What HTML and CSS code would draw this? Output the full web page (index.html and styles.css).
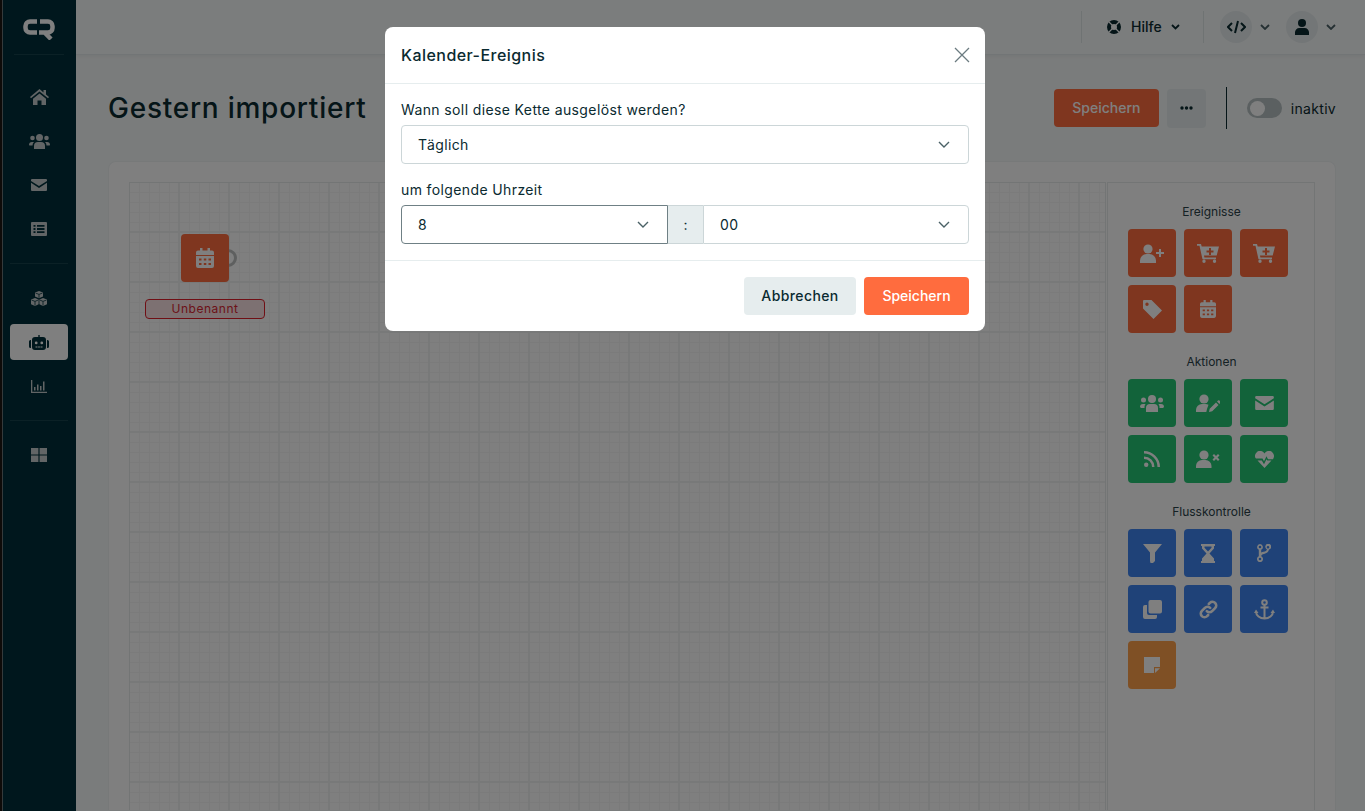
FILE: index.html
```html
<!DOCTYPE html>
<html lang="de">
<head>
    <meta charset="UTF-8">
    <title>Gestern importiert</title>
    <link rel="stylesheet" href="styles.css">
</head>
<body>
    <div class="app">
        <nav class="sidebar">
            <div class="logo">
                <svg width="32" height="21" viewBox="0 0 32 21"><path d="M14 2.500H7a4.500 4.500 0 0 0-4.500 4.500v2A4.500 4.500 0 0 0 7 13.500h7M17 2.500h8a4.500 4.500 0 0 1 4.500 4.500v2a4.500 4.500 0 0 1-4.500 4.500h-9M22 14l6 6" fill="none" stroke="currentColor" stroke-width="4.500"/></svg>
            </div>
            <ul class="nav-group">
                <li><svg width="19" height="16" viewBox="0 0 19 16"><path d="M9.500 0 0 8l1 1.200L9.500 2.500 18 9.200 19 8l-3-2.500V1h-2.500v2.400zM3 9.800V16h4.500v-4.500h4V16H16V9.800L9.500 4.500z"/></svg></li>
                <li><svg width="21" height="15" viewBox="0 0 21 15"><circle cx="10.500" cy="3.500" r="3.500"/><circle cx="3.500" cy="4" r="2.300"/><circle cx="17.500" cy="4" r="2.300"/><path d="M5 15v-3a4 4 0 0 1 4-4h3a4 4 0 0 1 4 4v3zM0 11a3 3 0 0 1 3-3h2a5 5 0 0 0-1.500 3.500h-3zM21 11a3 3 0 0 0-3-3h-2a5 5 0 0 1 1.500 3.500h3z"/></svg></li>
                <li><svg width="16" height="12" viewBox="0 0 16 12"><path d="M1 0h14a1 1 0 0 1 1 1v1L8 7 0 2V1a1 1 0 0 1 1-1zM0 3.800 8 9l8-5.200V11a1 1 0 0 1-1 1H1a1 1 0 0 1-1-1z"/></svg></li>
                <li><svg width="16" height="14" viewBox="0 0 16 14"><path fill-rule="evenodd" d="M1 0h14a1 1 0 0 1 1 1v12a1 1 0 0 1-1 1H1a1 1 0 0 1-1-1V1a1 1 0 0 1 1-1zm1.500 3v1.800h2V3zm3.500 0v1.800h7.500V3zM2.500 6.100v1.800h2V6.100zm3.500 0v1.800h7.500V6.100zM2.500 9.200V11h2V9.200zm3.500 0V11h7.500V9.200z"/></svg></li>
            </ul>
            <ul class="nav-group">
                <li><svg width="16" height="15" viewBox="0 0 16 15"><path d="M8 0l4 1.600v4L8 7.200 4 5.600v-4zM4 7l3.600 1.500v4.700L4 15 0 13.300V8.600zM12 7l4 1.600v4.700L12 15l-3.600-1.800V8.500z"/><path d="M4.500 2 8 3.400 11.500 2M8 3.400v3.400M.5 9 4 10.400 7.200 9M4 10.400V14.500M8.800 9 12 10.400 15.500 9M12 10.400V14.500" fill="none" stroke="#002f3a" stroke-width=".8"/></svg></li>
                <li class="active"><svg width="20" height="16" viewBox="0 0 20 16"><path fill-rule="evenodd" d="M6 3h3.300V1h1.400v2H14a3 3 0 0 1 3 3v7a3 3 0 0 1-3 3H6a3 3 0 0 1-3-3V6a3 3 0 0 1 3-3zm1.200 4.500a1.400 1.400 0 1 0 0 2.800 1.400 1.400 0 0 0 0-2.800zm5.600 0a1.400 1.400 0 1 0 0 2.800 1.400 1.400 0 0 0 0-2.800zM6.500 12.500v1h2v-1zm2.600 0v1h1.800v-1zm2.400 0v1h2v-1zM0 7.500A1.500 1.500 0 0 1 1.500 6H2v8h-.5A1.500 1.500 0 0 1 0 12.500zM20 7.500A1.500 1.500 0 0 0 18.500 6H18v8h.5a1.500 1.500 0 0 0 1.500-1.500z"/></svg></li>
                <li><svg width="16" height="13" viewBox="0 0 16 13"><path d="M0 0h1.300v11.700H16V13H0zM3 7h1.500v3.500H3zM6 4.500h1.500v6H6zM9 6h1.500v4.500H9zM12 1.500h1.500v9H12z"/></svg></li>
            </ul>
            <ul class="nav-group">
                <li><svg width="16" height="14" viewBox="0 0 16 14"><path d="M0 0h7.400v6.500H0zM8.600 0H16v6.500H8.600zM0 7.500h7.400V14H0zM8.600 7.500H16V14H8.600z"/></svg></li>
            </ul>
        </nav>

        <div class="main">
            <header class="topbar">
                <div class="topbar-item help">
                    <svg class="help-icon" width="14" height="14" viewBox="0 0 14 14"><circle cx="7" cy="7" r="5" fill="none" stroke="currentColor" stroke-width="4"/><path d="M2 2l10 10M12 2 2 12" stroke="#fff" stroke-width="1.200"/></svg>
                    <span class="help-text">Hilfe</span>
                    <svg class="chevron" width="9" height="6" viewBox="0 0 9 6"><path d="M1 1l3.500 3.500L8 1" fill="none" stroke="currentColor" stroke-width="1.800"/></svg>
                </div>
                <div class="topbar-item users">
                    <span class="round-btn"><svg width="19" height="14" viewBox="0 0 19 14"><path d="M5 3 1 7l4 4M14 3l4 4-4 4M11 1 8 13" fill="none" stroke="currentColor" stroke-width="2"/></svg></span>
                    <svg class="chevron light" width="10" height="6" viewBox="0 0 10 6"><path d="M1 1l4 4 4-4" fill="none" stroke="currentColor" stroke-width="1.800"/></svg>
                    <span class="round-btn"><svg width="14" height="16" viewBox="0 0 14 16"><circle cx="7" cy="4" r="4"/><path d="M0 14a4.500 4.500 0 0 1 4.500-5h5A4.500 4.500 0 0 1 14 14v2H0z"/></svg></span>
                    <svg class="chevron light" width="10" height="6" viewBox="0 0 10 6"><path d="M1 1l4 4 4-4" fill="none" stroke="currentColor" stroke-width="1.800"/></svg>
                </div>
            </header>

            <div class="content">
                <div class="page-head">
                    <h1>Gestern importiert</h1>
                    <div class="page-actions">
                        <button class="btn-save-page">Speichern</button>
                        <button class="btn-more"><svg width="13" height="4" viewBox="0 0 13 4"><circle cx="2" cy="2" r="1.700"/><circle cx="6.500" cy="2" r="1.700"/><circle cx="11" cy="2" r="1.700"/></svg></button>
                        <span class="page-divider"></span>
                        <span class="toggle"><span class="toggle-knob"></span></span>
                        <span class="toggle-label">inaktiv</span>
                    </div>
                </div>

                <div class="card">
                    <div class="canvas">
                        <div class="node">
                            <span class="node-port"></span>
                            <span class="tile orange node-tile">
                                <svg width="18" height="20" viewBox="0 0 18 20"><use href="#ico-calendar"/></svg>
                            </span>
                        </div>
                        <div class="node-label">Unbenannt</div>
                    </div>

                    <aside class="palette">
                        <h3>Ereignisse</h3>
                        <div class="tiles">
                            <span class="tile orange"><svg width="24" height="19" viewBox="0 0 24 19"><circle cx="8" cy="5" r="4.600"/><path d="M0 19v-2.500A6.500 6.500 0 0 1 6.500 10h3a6.500 6.500 0 0 1 6.500 6.500V19zM19 5h2v3h3v2h-3v3h-2v-3h-3V8h3z"/></svg></span>
                            <span class="tile orange"><svg width="22" height="19" viewBox="0 0 22 19"><use href="#ico-cart"/></svg></span>
                            <span class="tile orange"><svg width="22" height="19" viewBox="0 0 22 19"><use href="#ico-cart"/></svg></span>
                            <span class="tile orange"><svg width="19" height="19" viewBox="0 0 19 19"><path fill-rule="evenodd" d="M1 0h7.500L19 10.500 10.500 19 0 8.500V1a1 1 0 0 1 1-1zm3 2.500a1.700 1.700 0 1 0 0 3.400 1.700 1.700 0 0 0 0-3.400z"/></svg></span>
                            <span class="tile orange"><svg width="16" height="18" viewBox="0 0 18 20"><use href="#ico-calendar"/></svg></span>
                        </div>

                        <h3>Aktionen</h3>
                        <div class="tiles">
                            <span class="tile green"><svg width="24" height="17" viewBox="0 0 24 17"><circle cx="12" cy="4" r="4"/><circle cx="3.500" cy="5" r="2.500"/><circle cx="20.500" cy="5" r="2.500"/><path d="M6 17v-4a4 4 0 0 1 4-4h4a4 4 0 0 1 4 4v4zM0 12a3 3 0 0 1 3-3h2.500A5 5 0 0 0 4.500 13H1zM24 12a3 3 0 0 0-3-3h-2.500a5 5 0 0 1 1 4H23z"/></svg></span>
                            <span class="tile green"><svg width="24" height="18" viewBox="0 0 24 18"><circle cx="8" cy="5" r="4.600"/><path d="M0 18v-2a6 6 0 0 1 6-6h3.500a6 6 0 0 1 3 .8L11 15l-.7 3z"/><path d="M13 18l.7-3.200 6.300-6.300 2.500 2.500-6.300 6.300zM21 7.500l1-1a1 1 0 0 1 1.400 0l1 1a1 1 0 0 1 0 1.400l-1 1z"/></svg></span>
                            <span class="tile green"><svg width="19" height="14" viewBox="0 0 16 12"><use href="#ico-mail"/></svg></span>
                            <span class="tile green"><svg width="16" height="16" viewBox="0 0 16 16"><circle cx="2.200" cy="13.800" r="2.200"/><path d="M0 5.500A10.500 10.500 0 0 1 10.500 16H8A8 8 0 0 0 0 8zM0 0a16 16 0 0 1 16 16h-2.500A13.500 13.500 0 0 0 0 2.500z"/></svg></span>
                            <span class="tile green"><svg width="24" height="18" viewBox="0 0 24 18"><circle cx="8" cy="5" r="4.600"/><path d="M0 18v-2a6 6 0 0 1 6-6h3.500a6 6 0 0 1 6 6v2zM18 4l2 2 2-2 1.500 1.500-2 2 2 2L22 11l-2-2-2 2-1.500-1.500 2-2-2-2z"/></svg></span>
                            <span class="tile green"><svg width="19" height="17" viewBox="0 0 19 17"><path d="M9.500 2.500C11.500-.5 15-.8 17 1c2.500 2.300 2.500 5 1 7.200h-5l-1.500-3-2.500 5-1.500-2.700H1C-.5 6-.5 3.300 2 1c2-1.800 5.500-1.500 7.500 1.500zM2.500 9.500h4.300l2.200 3.800 2.500-5 .8 1.200h4.200L9.500 17z"/></svg></span>
                        </div>

                        <h3>Flusskontrolle</h3>
                        <div class="tiles">
                            <span class="tile blue"><svg width="19" height="19" viewBox="0 0 19 19"><path d="M0 0h19l-7 8.500V17l-2 2H7.500L7 17V8.500z"/></svg></span>
                            <span class="tile blue"><svg width="14" height="19" viewBox="0 0 14 19"><path fill-rule="evenodd" d="M0 0h14v2h-1v2.500L8.500 9.500 13 14.500V17h1v2H0v-2h1v-2.500L5.500 9.500 1 4.500V2H0zM3.500 2.500v1.300L7 7.500l3.500-3.700V2.500z"/></svg></span>
                            <span class="tile blue"><svg width="14" height="18" viewBox="0 0 14 18"><path fill-rule="evenodd" d="M3 0a3 3 0 0 1 1.200 5.700v2.700a8 8 0 0 1 2.300-.7c2-.3 3.200-1 3.500-2.300A3 3 0 1 1 12 5.600C11.500 8 9.500 9.500 7 9.900c-1.700.3-2.700 1-2.800 2.400a3 3 0 1 1-2.400 0V5.700A3 3 0 0 1 3 0zm0 1.700a1.300 1.300 0 1 0 0 2.600 1.300 1.300 0 0 0 0-2.600zM11 2a1.300 1.300 0 1 0 0 2.600A1.300 1.300 0 0 0 11 2zM3 13.700a1.300 1.300 0 1 0 0 2.600 1.300 1.300 0 0 0 0-2.600z"/></svg></span>
                            <span class="tile blue"><svg width="19" height="19" viewBox="0 0 19 19"><path d="M7.500 0H17a2 2 0 0 1 2 2v9.500a2 2 0 0 1-2 2H7.500a2 2 0 0 1-2-2V2a2 2 0 0 1 2-2zM4 5v8a2 2 0 0 0 2 2h8v2a2 2 0 0 1-2 2H2a2 2 0 0 1-2-2V7a2 2 0 0 1 2-2z"/></svg></span>
                            <span class="tile blue"><svg width="19" height="19" viewBox="0 0 19 19"><g fill="none" stroke="#fff" stroke-width="2.600" stroke-linecap="round"><path d="M7.800 11.200a3.700 3.700 0 0 0 5.300 0l3-3a3.700 3.700 0 0 0-5.200-5.300l-1.100 1.100"/><path d="M11.200 7.800a3.700 3.700 0 0 0-5.300 0l-3 3a3.700 3.700 0 0 0 5.200 5.300l1.100-1.100"/></g></svg></span>
                            <span class="tile blue"><svg width="21" height="21" viewBox="0 0 21 21"><g fill="none" stroke="#fff" stroke-width="2"><circle cx="10.500" cy="3.500" r="2.300"/><path d="M10.500 5.800V19.500M6.500 8.500h8M2 12.500c0 4 3.800 7 8.500 7s8.500-3 8.500-7"/></g><path d="M0 14l2-3.500L4.500 14zM16.500 14l2.500-3.500 2 3.500z"/></svg></span>
                            <span class="tile amber"><svg width="16" height="16" viewBox="0 0 16 16"><path d="M0 0h16v10h-6v6H0zM11 11.200h5L11 16z"/></svg></span>
                        </div>
                    </aside>
                </div>
            </div>
        </div>
    </div>

    <svg class="defs" width="0" height="0">
        <defs>
            <path id="ico-calendar" fill-rule="evenodd" d="M4 0h2.500v2.500h5V0H14v2.500h2a2 2 0 0 1 2 2V7H0V4.500a2 2 0 0 1 2-2h2zM0 8h18v10a2 2 0 0 1-2 2H2a2 2 0 0 1-2-2zm3 2.500v2h2.500v-2zm4.800 0v2h2.500v-2zm4.700 0v2H15v-2zM3 15v2h2.500v-2zm4.800 0v2h2.500v-2zm4.700 0v2H15v-2z"/>
            <path id="ico-cart" fill-rule="evenodd" d="M0 0h4l.7 2.500H22l-2.300 9H7l.4 2H19v1.800H5.500L2.500 1.800H0zM12 4v2.500H9.500v2H12V11h2V8.500h2.500v-2H14V4zM7 15.500a1.700 1.700 0 1 1 0 3.400 1.700 1.700 0 0 1 0-3.400zm10.500 0a1.700 1.700 0 1 1 0 3.400 1.700 1.700 0 0 1 0-3.400z"/>
            <path id="ico-mail" d="M1 0h14a1 1 0 0 1 1 1v1L8 7 0 2V1a1 1 0 0 1 1-1zM0 3.800 8 9l8-5.200V11a1 1 0 0 1-1 1H1a1 1 0 0 1-1-1z"/>
        </defs>
    </svg>

    <div class="overlay">
        <div class="modal">
            <div class="modal-head">
                <h2>Kalender-Ereignis</h2>
                <svg class="modal-close" width="16" height="16" viewBox="0 0 16 16"><path d="M1 1l14 14M15 1 1 15" fill="none" stroke="currentColor" stroke-width="1.300"/></svg>
            </div>
            <div class="modal-body">
                <label class="field-label">Wann soll diese Kette ausgelöst werden?</label>
                <div class="select">
                    <span>Täglich</span>
                    <svg width="12" height="7" viewBox="0 0 12 7"><path d="M1 1l5 5 5-5" fill="none" stroke="currentColor" stroke-width="1.400"/></svg>
                </div>
                <label class="field-label second">um folgende Uhrzeit</label>
                <div class="time-group">
                    <div class="select hour">
                        <span>8</span>
                        <svg width="12" height="7" viewBox="0 0 12 7"><path d="M1 1l5 5 5-5" fill="none" stroke="currentColor" stroke-width="1.400"/></svg>
                    </div>
                    <div class="time-sep">:</div>
                    <div class="select minute">
                        <span>00</span>
                        <svg width="12" height="7" viewBox="0 0 12 7"><path d="M1 1l5 5 5-5" fill="none" stroke="currentColor" stroke-width="1.400"/></svg>
                    </div>
                </div>
            </div>
            <div class="modal-foot">
                <button class="btn-cancel">Abbrechen</button>
                <button class="btn-save">Speichern</button>
            </div>
        </div>
    </div>
</body>
</html>
```

FILE: styles.css
```css
* {
    box-sizing: border-box;
}

body {
    font-family: 'Inter', 'Liberation Sans', sans-serif;
    background-color: #f5f8f8;
    color: #0a2a30;
    margin: 0;
    height: 811px;
    overflow: hidden;
}

.app {
    display: flex;
    height: 811px;
}

.sidebar {
    width: 76px;
    flex-shrink: 0;
    background-color: #002f3a;
    border-left: 2px solid #1c1712;
    box-shadow: inset 1px 0 0 #6a7576;
    padding: 0 8px;
}

.logo {
    height: 55px;
    margin: 0 4px;
    padding-top: 4px;
    display: flex;
    align-items: center;
    justify-content: center;
    border-bottom: 1px solid #16424d;
    color: #fff;
}

.nav-group {
    list-style: none;
    margin: 0;
    padding: 16px 0;
    border-bottom: 1px solid #16424d;
}

.logo + .nav-group {
    padding-top: 24px;
}

.nav-group:last-child {
    border-bottom: none;
}

.nav-group li {
    height: 36px;
    margin-bottom: 8px;
    border-radius: 4px;
    display: flex;
    align-items: center;
    justify-content: center;
    color: #c4cbcc;
}

.nav-group li:last-child {
    margin-bottom: 0;
}

.nav-group svg {
    fill: currentColor;
}

.nav-group li.active {
    background-color: #fff;
    color: #002f3a;
}

.main {
    flex: 1;
    min-width: 0;
}

.topbar {
    height: 55px;
    padding-bottom: 1px;
    background-color: #f7fafa;
    border-bottom: 1px solid #e5ebec;
    box-shadow: 0 1px 4px rgba(0, 0, 0, 0.06);
    display: flex;
    justify-content: flex-end;
    align-items: center;
}

.topbar-item {
    display: flex;
    align-items: center;
    height: 32px;
}

.help {
    width: 123px;
    border-left: 1px solid #dfe6e7;
    border-right: 1px solid #dfe6e7;
    padding-left: 25px;
    font-size: 14px;
    font-weight: 500;
}

.help-icon {
    margin-right: 10px;
}

.help-text {
    margin-right: 9px;
}

.users {
    padding: 0 29px 0 16px;
}

.round-btn {
    width: 32px;
    height: 32px;
    border-radius: 50%;
    background-color: #e6edee;
    display: flex;
    align-items: center;
    justify-content: center;
}

.round-btn svg {
    fill: currentColor;
}

.chevron.light {
    color: #4a6166;
    margin: 0 16px 0 8px;
}

.chevron.light:last-child {
    margin-right: 0;
}

.content {
    padding: 0 29px 0 32px;
}

.page-head {
    height: 106px;
    display: flex;
    justify-content: space-between;
    align-items: center;
}

h1 {
    margin: 0;
    font-size: 28px;
    font-weight: 500;
    letter-spacing: 0.75px;
}

.page-actions {
    display: flex;
    align-items: center;
}

.btn-save-page {
    width: 105px;
    height: 38px;
    padding: 0 0 1px;
    background-color: #ff6c3e;
    color: #fff;
    border: none;
    border-radius: 4px;
    font: 500 14px 'Inter', sans-serif;
}

.btn-more {
    width: 39px;
    height: 39px;
    margin-left: 8px;
    background-color: #e6edee;
    border: none;
    border-radius: 4px;
    display: flex;
    align-items: center;
    justify-content: center;
}

.btn-more svg {
    fill: #0a2a30;
}

.page-divider {
    width: 1px;
    height: 42px;
    background-color: #0a2a30;
    margin: 0 20px;
}

.toggle {
    width: 35px;
    height: 20px;
    border-radius: 10px;
    background-color: #b6c0c2;
    padding: 2px;
    margin-right: 9px;
}

.toggle-knob {
    display: block;
    width: 15px;
    height: 15px;
    margin: 0.5px 0 0 1px;
    border-radius: 50%;
    background-color: #fff;
}

.toggle-label {
    font-size: 14px;
    letter-spacing: 0.3px;
}

.card {
    height: 649px;
    background-color: #fff;
    border: 1px solid #eef2f3;
    border-bottom: none;
    border-radius: 8px 8px 0 0;
    padding: 20px 20px 0;
    display: flex;
}

.canvas {
    flex: 1;
    min-width: 0;
    position: relative;
    border: 1px solid #e6eaeb;
    border-bottom: none;
    background-color: #fff;
    background-image:
        linear-gradient(#f1f2f2 2px, transparent 2px),
        linear-gradient(90deg, #f1f2f2 2px, transparent 2px),
        linear-gradient(#f6f7f7 1px, transparent 1px),
        linear-gradient(90deg, #f6f7f7 1px, transparent 1px);
    background-size: 50px 50px, 50px 50px, 10px 10px, 10px 10px;
    background-position: -2px -2px, -2px -2px, -1px -1px, -1px -1px;
}

.node {
    position: absolute;
    left: 51px;
    top: 51px;
}

.node-tile {
    position: relative;
}

.node-port {
    position: absolute;
    left: 38px;
    top: 15px;
    width: 18px;
    height: 18px;
    border: 3px solid #bcbfbf;
    border-radius: 50%;
    background-color: #fff;
}

.node-label {
    position: absolute;
    left: 15px;
    top: 116px;
    width: 120px;
    height: 20px;
    background-color: #fbe3e4;
    border: 1px solid #e01f2b;
    border-radius: 4px;
    color: #d92532;
    font-size: 12px;
    line-height: 18px;
    text-align: center;
    letter-spacing: 0.5px;
}

.palette {
    width: 208px;
    flex-shrink: 0;
    margin-left: 1px;
    border: 1px solid #e6eaeb;
    border-bottom: none;
    background-color: #fff;
    padding: 0 19px 0 20px;
}

.palette h3 {
    margin: 21px 0 10px;
    font-size: 12px;
    font-weight: 400;
    line-height: 15px;
    color: #2a4249;
    text-align: center;
}

.tiles {
    display: grid;
    grid-template-columns: repeat(3, 48px);
    gap: 8px;
}

.tile {
    width: 48px;
    height: 48px;
    border-radius: 4px;
    display: flex;
    align-items: center;
    justify-content: center;
}

.tile svg {
    fill: #fff;
}

.orange {
    background-color: #ff6c3e;
}

.green {
    background-color: #24c674;
}

.blue {
    background-color: #3e84f0;
}

.amber {
    background-color: #ffa04a;
}

.defs {
    position: absolute;
}

.overlay {
    position: fixed;
    inset: 0;
    background-color: rgba(0, 0, 0, 0.5);
    display: flex;
    justify-content: center;
    align-items: flex-start;
    padding: 27px 0 0 5px;
}

.modal {
    width: 600px;
    height: 304px;
    background-color: #fff;
    border-radius: 8px;
}

.modal-head {
    height: 57px;
    padding: 0 15px 0 16px;
    display: flex;
    justify-content: space-between;
    align-items: center;
    border-bottom: 1px solid #e6edee;
}

.modal-head h2 {
    margin: 0;
    font-size: 16px;
    font-weight: 500;
    letter-spacing: 0.45px;
}

.modal-close {
    color: #6b7b80;
}

.modal-body {
    height: 177px;
    padding: 15px 16px 0;
    border-bottom: 1px solid #e6edee;
}

.field-label {
    display: block;
    font-size: 14px;
    line-height: 21px;
    margin-bottom: 5px;
    letter-spacing: 0.38px;
}

.field-label.second {
    margin-top: 15px;
}

.select {
    height: 39px;
    padding: 0 16px 1px;
    border: 1px solid #ccd6d8;
    border-radius: 4px;
    display: flex;
    justify-content: space-between;
    align-items: center;
    font-size: 14px;
    letter-spacing: 0.4px;
    color: #0a2a30;
}

.select svg {
    color: #4a6166;
    margin-right: 2px;
}

.time-group {
    display: flex;
}

.select.hour {
    width: 267px;
    border-color: #6f8085;
    border-radius: 4px 0 0 4px;
}

.select.minute {
    flex: 1;
    border-radius: 0 4px 4px 0;
}

.time-sep {
    width: 35px;
    background-color: #e6edee;
    border-top: 1px solid #ccd6d8;
    border-bottom: 1px solid #ccd6d8;
    display: flex;
    align-items: center;
    justify-content: center;
    font-size: 14px;
}

.modal-foot {
    height: 70px;
    padding: 16px;
    display: flex;
    justify-content: flex-end;
    gap: 8px;
}

.btn-cancel, .btn-save {
    height: 38px;
    padding: 0 0 1px;
    border: none;
    border-radius: 4px;
    font: 500 14px 'Inter', sans-serif;
}

.btn-cancel {
    width: 112px;
    background-color: #e6edee;
    color: #0a2a30;
    letter-spacing: 0.4px;
}

.btn-save {
    width: 105px;
    background-color: #ff6c3e;
    color: #fff;
}
```
